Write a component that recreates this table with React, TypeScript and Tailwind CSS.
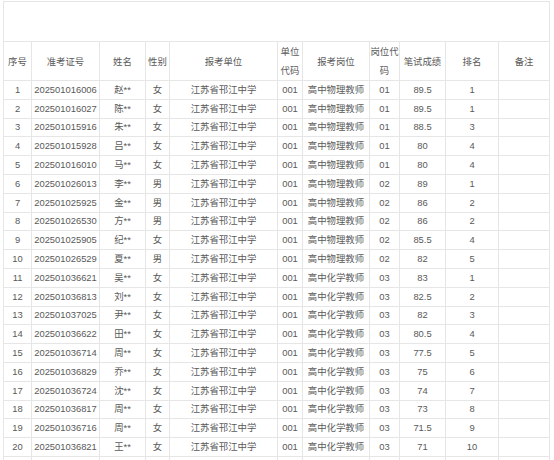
import React from "react";

type Row = [string, string, string, string, string, string, string];

// 序号 准考证号 姓名 性别 岗位 岗位代码 成绩 排名 (单位 and 单位代码 are the same for all)
const rows: Row[] = [
  ["202501016006", "赵**", "女", "高中物理教师", "01", "89.5", "1"],
  ["202501016027", "陈**", "女", "高中物理教师", "01", "89.5", "1"],
  ["202501015916", "朱**", "女", "高中物理教师", "01", "88.5", "3"],
  ["202501015928", "吕**", "女", "高中物理教师", "01", "80", "4"],
  ["202501016010", "马**", "女", "高中物理教师", "01", "80", "4"],
  ["202501026013", "李**", "男", "高中物理教师", "02", "89", "1"],
  ["202501025925", "金**", "男", "高中物理教师", "02", "86", "2"],
  ["202501026530", "方**", "男", "高中物理教师", "02", "86", "2"],
  ["202501025905", "纪**", "女", "高中物理教师", "02", "85.5", "4"],
  ["202501026529", "夏**", "男", "高中物理教师", "02", "82", "5"],
  ["202501036621", "吴**", "女", "高中化学教师", "03", "83", "1"],
  ["202501036813", "刘**", "女", "高中化学教师", "03", "82.5", "2"],
  ["202501037025", "尹**", "女", "高中化学教师", "03", "82", "3"],
  ["202501036622", "田**", "女", "高中化学教师", "03", "80.5", "4"],
  ["202501036714", "周**", "女", "高中化学教师", "03", "77.5", "5"],
  ["202501036829", "乔**", "女", "高中化学教师", "03", "75", "6"],
  ["202501036724", "沈**", "女", "高中化学教师", "03", "74", "7"],
  ["202501036817", "周**", "女", "高中化学教师", "03", "73", "8"],
  ["202501036716", "周**", "女", "高中化学教师", "03", "71.5", "9"],
  ["202501036821", "王**", "女", "高中化学教师", "03", "71", "10"],
];

const widths = [28, 68, 46, 24, 108, 25, 67, 30, 46, 53, 51];

const headers = ["序号", "准考证号", "姓名", "性别", "报考单位", "单位代码", "报考岗位", "岗位代码", "笔试成绩", "排名", "备注"];

const cell = "border border-[#e6e6e6] px-0 py-0 text-center align-middle";

export default function App() {
  return (
    <div
      className="h-[460px] w-[554px] overflow-hidden bg-white pl-[3px] pt-px text-[9.4px] text-[#595959]"
      style={{ fontFamily: '"Liberation Sans", "Noto Sans CJK SC", sans-serif' }}
    >
      <table className="w-[547px] table-fixed border-collapse">
        <colgroup>
          {widths.map((w, i) => (
            <col key={i} style={{ width: w }} />
          ))}
        </colgroup>
        <tbody>
          <tr className="h-[40px]">
            <td colSpan={11} className={cell}></td>
          </tr>
          <tr className="h-[39px] leading-[19px]">
            {headers.map((h) => (
              <td key={h} className={`${cell} break-all`}>
                {h}
              </td>
            ))}
          </tr>
          {rows.map((r, i) => (
            <tr key={i} className="h-[18.8px] leading-[16px]">
              <td className={cell}>{i + 1}</td>
              <td className={cell}>{r[0]}</td>
              <td className={cell}>{r[1]}</td>
              <td className={cell}>{r[2]}</td>
              <td className={cell}>江苏省邗江中学</td>
              <td className={cell}>001</td>
              <td className={cell}>{r[3]}</td>
              <td className={cell}>{r[4]}</td>
              <td className={cell}>{r[5]}</td>
              <td className={cell}>{r[6]}</td>
              <td className={cell}></td>
            </tr>
          ))}
          <tr className="h-[18.8px]">
            {widths.map((_, i) => (
              <td key={i} className={cell}></td>
            ))}
          </tr>
        </tbody>
      </table>
    </div>
  );
}
